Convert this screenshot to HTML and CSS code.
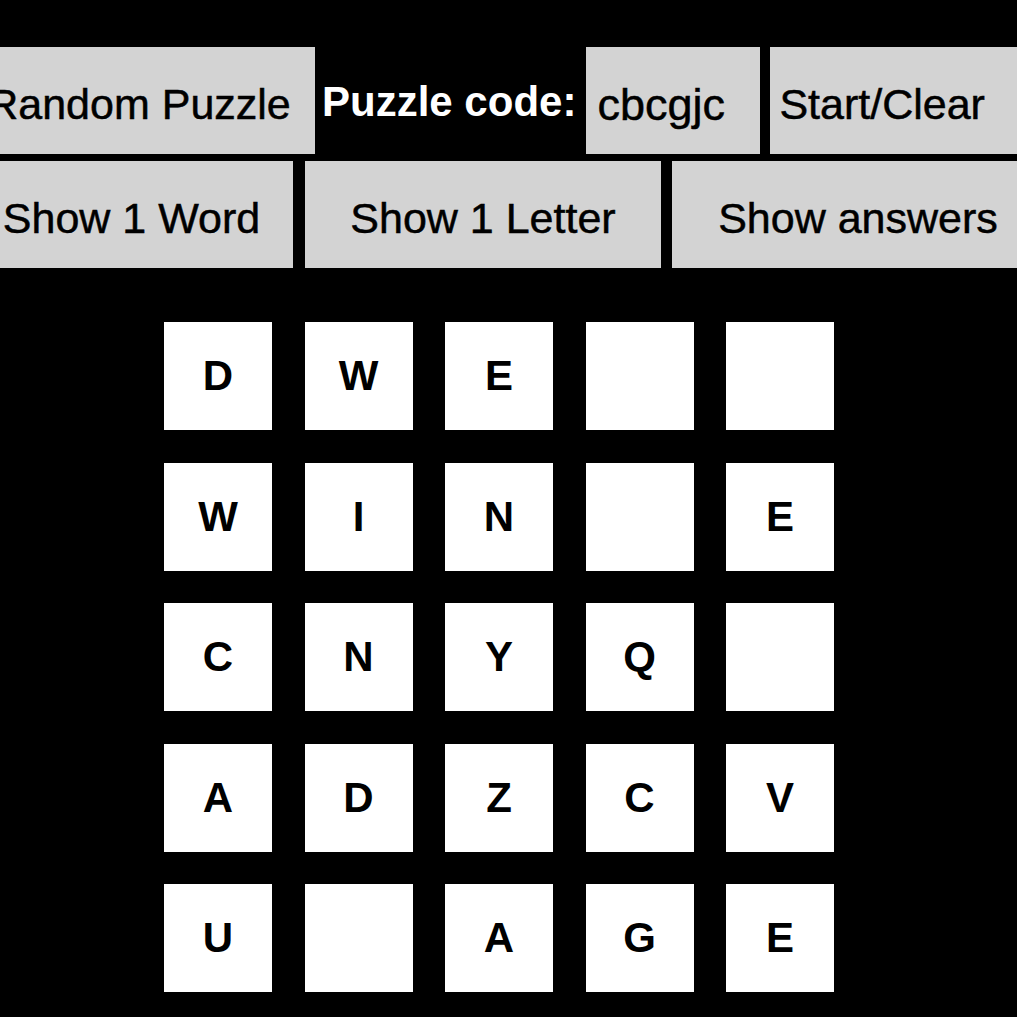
FILE: index.html
```html
<!DOCTYPE html>
<html lang="en">
  <head>
    <meta charset="UTF-8" />
    <title>Word Puzzle</title>
    <link rel="stylesheet" href="styles.css">
  </head>
  <body>
    <div class="controls">
      <div class="row row-top">
        <button class="btn btn-random">Random Puzzle</button>
        <label class="code-label" for="code">Puzzle code:</label>
        <input id="code" class="code-input" type="text" value="cbcgjc">
        <button class="btn btn-start">Start/Clear</button>
      </div>
      <div class="row row-hints">
        <button class="btn btn-word">Show 1 Word</button>
        <button class="btn btn-letter">Show 1 Letter</button>
        <button class="btn btn-answers">Show answers</button>
      </div>
    </div>
    <div id="board" class="board">
      <span class="cell">D</span>
      <span class="cell">W</span>
      <span class="cell">E</span>
      <span class="cell"></span>
      <span class="cell"></span>

      <span class="cell">W</span>
      <span class="cell">I</span>
      <span class="cell">N</span>
      <span class="cell"></span>
      <span class="cell">E</span>

      <span class="cell">C</span>
      <span class="cell">N</span>
      <span class="cell">Y</span>
      <span class="cell">Q</span>
      <span class="cell"></span>

      <span class="cell">A</span>
      <span class="cell">D</span>
      <span class="cell">Z</span>
      <span class="cell">C</span>
      <span class="cell">V</span>

      <span class="cell">U</span>
      <span class="cell"></span>
      <span class="cell">A</span>
      <span class="cell">G</span>
      <span class="cell">E</span>
    </div>
  </body>
</html>
```

FILE: styles.css
```css
/* puzzle page */
body {
  margin: 0;
  background-color: #000;
  font-family: "Liberation Sans", Arial, sans-serif;
  overflow: hidden;
}

.controls {
  padding-top: 47px;
}

.row {
  display: flex;
  height: 107px;
  white-space: nowrap;
}

.row-hints {
  margin-top: 7px;
  margin-left: -30px;
}

.row-top {
  margin-left: -37px;
}

.btn {
  flex: none;
  height: 107px;
  padding: 8px 0 0 0;
  border: none;
  border-radius: 0;
  background-color: #d3d3d3;
  color: #000;
  font-family: inherit;
  font-size: 43px;
  -webkit-text-stroke: 0.5px #000;
  text-align: center;
  cursor: pointer;
}

.btn-random {
  width: 352px;
}

.code-label {
  flex: none;
  display: flex;
  align-items: center;
  margin-left: 7px;
  padding-top: 2px;
  color: #fff;
  font-size: 42px;
  font-weight: bold;
}

.code-input {
  flex: none;
  width: 174px;
  height: 107px;
  margin-left: 10px;
  padding: 8px 0 0 11px;
  box-sizing: border-box;
  border: none;
  background-color: #d3d3d3;
  color: #000;
  font-family: inherit;
  font-size: 45px;
  -webkit-text-stroke: 0.5px #000;
  outline: none;
}

.btn-start {
  width: 290px;
  margin-left: 10px;
  padding-left: 9px;
  text-align: left;
}

.btn-word {
  width: 323px;
}

.btn-letter {
  width: 356px;
  margin-left: 12px;
}

.btn-answers {
  width: 372px;
  margin-left: 11px;
}

.board {
  display: grid;
  grid-template-columns: repeat(5, 108px);
  grid-auto-rows: 108px;
  gap: 32.5px;
  margin: 54px 0 0 164px;
}

.cell {
  display: flex;
  align-items: center;
  justify-content: center;
  background-color: #fff;
  color: #000;
  font-size: 42px;
  font-weight: bold;
}
```
